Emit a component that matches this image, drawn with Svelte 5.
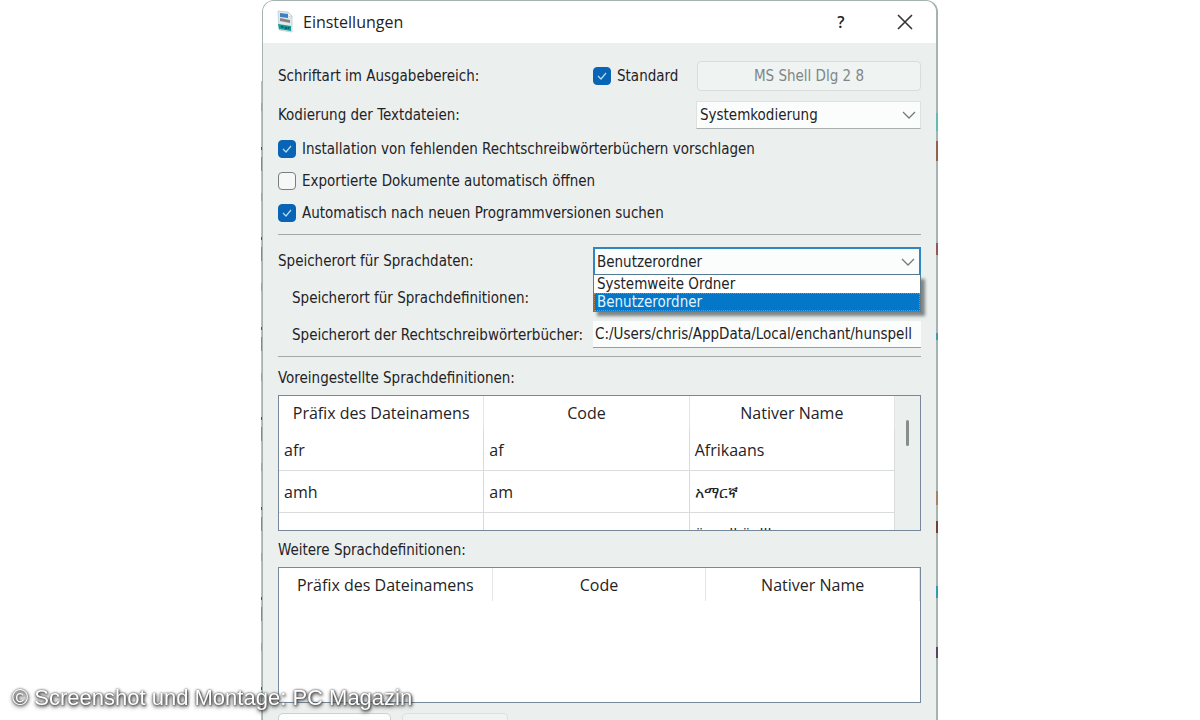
<script lang="ts">
  let standardFont = $state(true);
  let encoding = $state("Systemkodierung");
  let location = $state("Benutzerordner");
  let dictionaries = $state("C:/Users/chris/AppData/Local/enchant/hunspell");
  let menuOpen = $state(true);

  const locations = ["Systemweite Ordner", "Benutzerordner"];
  const columns = ["Präfix des Dateinamens", "Code", "Nativer Name"];

  let options = $state([
    { label: "Installation von fehlenden Rechtschreibwörterbüchern vorschlagen", checked: true },
    { label: "Exportierte Dokumente automatisch öffnen", checked: false },
    { label: "Automatisch nach neuen Programmversionen suchen", checked: true },
  ]);

  const languages = [
    ["afr", "af", "Afrikaans"],
    ["amh", "am", "አማርኛ"],
    ["", "", "ö      ll ö  lll"],
  ];

  function choose(name: string) {
    location = name;
    menuOpen = false;
  }
</script>

<main>
  <section class="dialog" aria-labelledby="dialog-title">
    <header>
      <svg class="app-icon" viewBox="0 0 18 24" aria-hidden="true">
        <path d="M2 1l10 1 4 4v16L3 20z" fill="#dfeaf0" stroke="#b9c6cc" stroke-width=".7" />
        <path d="M12 2v4l4 1z" fill="#fff" stroke="#b5c3c9" stroke-width=".5" />
        <path d="M4 3l8 1v4l-8-1z" fill="#3f7fc4" />
        <path d="M4 8l10 2v3L4 11z" fill="#8f8379" />
        <path d="M2 14l13 2v5L3 19z" fill="#119a98" />
        <path d="M5 17l1-1 1 2m2-1l1 2 1-2m1 2l1-2" fill="none" stroke="#0b4b58" />
      </svg>
      <h1 id="dialog-title">Einstellungen</h1>
      <button class="title-button" aria-label="Hilfe">?</button>
      <button class="title-button" aria-label="Schließen">
        <svg viewBox="0 0 16 16" width="16" height="16">
          <path d="M1 1l14 14M15 1L1 15" fill="none" stroke="#333" stroke-width="1.6" />
        </svg>
      </button>
    </header>

    <div class="body">
      <div class="row font-row">
        <span>Schriftart im Ausgabebereich:</span>
        <label class="check">
          <input type="checkbox" bind:checked={standardFont} />
          Standard
        </label>
        <button class="font-button" disabled={standardFont}>MS Shell Dlg 2 8</button>
      </div>
      <div class="row encoding-row">
        <label for="encoding">Kodierung der Textdateien:</label>
        <select id="encoding" bind:value={encoding}>
          <option>Systemkodierung</option>
          <option>UTF-8</option>
        </select>
      </div>

      <div class="options">
        {#each options as option}
          <label class="check">
            <input type="checkbox" bind:checked={option.checked} />
            {option.label}
          </label>
        {/each}
      </div>

      <hr />

      <div class="paths">
        <div class="row path-row">
          <label for="location">Speicherort für Sprachdaten:</label>
          <div class="combo">
            <select id="location" class:active={menuOpen} bind:value={location}>
              {#each locations as name}
                <option>{name}</option>
              {/each}
            </select>
            {#if menuOpen}
              <div class="menu" role="listbox" aria-label="Speicherort für Sprachdaten">
                {#each locations as name}
                  <button
                    role="option"
                    aria-selected={name === location}
                    class:selected={name === location}
                    onclick={() => choose(name)}>{name}</button
                  >
                {/each}
              </div>
            {/if}
          </div>
        </div>
        <div class="row path-row">
          <span class="sub">Speicherort für Sprachdefinitionen:</span>
        </div>
        <div class="row path-row">
          <label class="sub" for="dictionaries">Speicherort der Rechtschreibwörterbücher:</label>
          <input id="dictionaries" type="text" bind:value={dictionaries} />
        </div>
      </div>

      <hr />

      <h2>Voreingestellte Sprachdefinitionen:</h2>
      <div class="list">
        <table>
          <thead>
            <tr>
              {#each columns as column}
                <th>{column}</th>
              {/each}
            </tr>
          </thead>
          <tbody>
            {#each languages as language}
              <tr>
                {#each language as cell}
                  <td>{cell}</td>
                {/each}
              </tr>
            {/each}
          </tbody>
        </table>
        <div class="scrollbar"><div class="thumb"></div></div>
      </div>

      <h2>Weitere Sprachdefinitionen:</h2>
      <div class="list">
        <table>
          <thead>
            <tr>
              {#each columns as column}
                <th>{column}</th>
              {/each}
            </tr>
          </thead>
        </table>
      </div>

      <div class="actions">
        <button class="action" aria-label="Hinzufügen">
          <svg viewBox="0 0 18 18" width="18" height="18">
            <circle cx="9" cy="9" r="8" fill="#2fae4e" />
            <path d="M9 5v8M5 9h8" stroke="#fff" stroke-width="2" />
          </svg>
        </button>
        <button class="action" aria-label="Entfernen" disabled></button>
      </div>
    </div>
  </section>

  <p class="credit">© Screenshot und Montage: PC Magazin</p>
</main>

<style>
  :global(body) {
    background: #fff;
  }
  main {
    height: 100vh;
    overflow: hidden;
    box-sizing: border-box;
    padding: 0 262px;
    font: 15px/20px "DejaVu Sans Condensed", "DejaVu Sans", sans-serif;
    color: #1f2326;
  }
  button,
  input,
  select {
    box-sizing: border-box;
    margin: 0;
    font: inherit;
    color: inherit;
  }
  .dialog {
    position: relative;
    border: 1px solid #a5b3b1;
    border-right-width: 2px;
    border-bottom: 0;
    border-radius: 12px 12px 0 0;
    background: #ebefee;
  }
  /* bits of the desktop that show at the window edges */
  .dialog::before,
  .dialog::after {
    content: "";
    position: absolute;
    top: 80px;
    bottom: 0;
    width: 2px;
  }
  .dialog::before {
    left: -2px;
    width: 1px;
    background: repeating-linear-gradient(#b4c2c3 0 22px, #b39a94 22px 30px, #b4c2c3 30px 66px, #4b5a60 66px 69px, #b4c2c3 69px 76px, #5f9aa6 76px 90px);
  }
  .dialog::after {
    right: -2px;
    background: linear-gradient(
      transparent 32px,
      #63b9b3 32px 50px,
      transparent 50px 60px,
      #94604f 60px 80px,
      transparent 80px 162px,
      #8a5b59 162px 174px,
      transparent 174px 252px,
      #459aaa 252px 259px,
      transparent 259px 410px,
      #a38266 410px 424px,
      transparent 424px 440px,
      #70413d 440px 452px,
      transparent 452px 505px,
      #3997ae 505px 517px,
      transparent 517px 566px,
      #5c4360 566px 577px,
      transparent 577px
    );
  }
  header {
    display: flex;
    align-items: center;
    height: 42px;
    padding: 0 15px 0 13px;
    border-radius: 11px 11px 0 0;
    background: #fff;
  }
  .app-icon {
    width: 18px;
    height: 24px;
  }
  h1 {
    flex: 1;
    margin: 0 0 0 9px;
    font: 16px/20px "Open Sans", sans-serif;
  }
  .title-button {
    display: flex;
    justify-content: center;
    align-items: center;
    width: 32px;
    height: 32px;
    margin-left: 32px;
    padding: 0;
    border: 0;
    background: none;
    font: 600 16px/20px "Open Sans", sans-serif;
  }
  .body {
    padding: 17px 15px 0;
  }
  .row {
    display: grid;
    align-items: center;
  }
  .font-row {
    grid-template-columns: 315px 104px 1fr;
    height: 32px;
  }
  .encoding-row {
    grid-template-columns: 418px 1fr;
    height: 46px;
  }
  .path-row {
    grid-template-columns: 315px 1fr;
    height: 36px;
  }
  .check {
    display: flex;
    align-items: center;
    gap: 6px;
    white-space: nowrap;
  }
  .check input {
    appearance: none;
    width: 18px;
    height: 18px;
    border: 1px solid #777f80;
    border-radius: 4px;
    background: #f5f8f7;
  }
  .check input:checked {
    border-color: #0865b6;
    background: #0865b6
      url("data:image/svg+xml,%3Csvg xmlns='http://www.w3.org/2000/svg' viewBox='0 0 16 16'%3E%3Cpath d='M4 8l3 3 5-6' fill='none' stroke='%23b9dcf5' stroke-width='1.2'/%3E%3C/svg%3E");
  }
  .font-button {
    height: 30px;
    border: 1px solid #d8dddc;
    border-radius: 4px;
    background: #eff3f2;
  }
  .font-button:disabled {
    color: #7f8687;
  }
  select {
    appearance: none;
    display: block;
    width: 100%;
    height: 28px;
    padding: 0 24px 0 3px;
    border: 1px solid #dde2e1;
    border-bottom-color: #a9b0b0;
    border-radius: 0;
    background: #fbfdfc
      url("data:image/svg+xml,%3Csvg xmlns='http://www.w3.org/2000/svg' width='14' height='8'%3E%3Cpath d='M1 1l6 6 6-6' fill='none' stroke='%23727a7b' stroke-width='1.3'/%3E%3C/svg%3E")
      no-repeat right 4px center;
  }
  select.active {
    border: 2px solid #2f86c0;
    border-bottom: 1px solid #547990;
    padding-left: 2px;
  }
  .options {
    display: grid;
    gap: 12px;
    padding: 1px 0 11px;
  }
  hr {
    height: 1px;
    margin: 0;
    border: 0;
    background: #a2a9a8;
  }
  .paths {
    padding: 8px 0 3px;
  }
  .path-row + .path-row {
    height: 37px;
  }
  .sub {
    padding-left: 14px;
    white-space: nowrap;
  }
  .combo {
    position: relative;
  }
  .menu {
    position: absolute;
    z-index: 1;
    top: 100%;
    left: 0;
    right: 0;
    display: grid;
    border: 1px solid #667a84;
    border-top: 0;
    background: #fff;
    box-shadow: 4px 4px 3px #7d8586;
  }
  .menu button {
    height: 18px;
    padding: 0 3px;
    border: 0;
    background: none;
    line-height: 18px;
    text-align: left;
  }
  .menu .selected {
    background: #0477c8;
    color: #e2f3fd;
    outline: 1px dotted #b58458;
    outline-offset: -1px;
  }
  input[type="text"] {
    width: 100%;
    height: 27px;
    padding: 0 2px;
    border: 0;
    border-bottom: 1px solid #969e9e;
    background: #fbfdfc;
  }
  h2 {
    margin: 0;
    padding: 11px 0 7px;
    font-size: 15px;
    font-weight: 400;
    line-height: 20px;
  }
  .list {
    display: flex;
    height: 134px;
    overflow: hidden;
    border: 1px solid #76899a;
    background: #fff;
    font: 16px/20px "Open Sans", sans-serif;
  }
  .list + h2 {
    padding: 9px 0 7px;
  }
  table {
    flex: 1;
    align-self: flex-start;
    width: 100%;
    table-layout: fixed;
    border-spacing: 0;
  }
  th {
    height: 33px;
    padding: 0;
    border-right: 1px solid #e1e5e5;
    font-weight: 400;
  }
  td {
    height: 41px;
    padding: 0 5px;
    border-right: 1px solid #d8dcdc;
    border-bottom: 1px solid #d8dcdc;
    white-space: pre;
  }
  .scrollbar {
    flex: none;
    width: 25px;
    padding-top: 24px;
    background: #ebefee;
  }
  .thumb {
    width: 3px;
    height: 26px;
    margin: 0 auto;
    border-radius: 2px;
    background: #858d8d;
  }
  .actions {
    display: flex;
    gap: 11px;
    padding-top: 10px;
  }
  .action {
    width: 113px;
    height: 30px;
    padding: 0 6px;
    border: 1px solid #cbd0d0;
    border-radius: 5px;
    background: #fcfdfd;
    text-align: left;
  }
  .action svg {
    display: block;
  }
  .action:disabled {
    width: 106px;
    border-color: #dce1e0;
    background: #eff3f2;
  }
  .credit {
    position: fixed;
    left: 12px;
    bottom: 8px;
    margin: 0;
    color: #fff;
    font: 22px/28px "Liberation Sans", sans-serif;
    text-shadow: 0 0 2px #444, 1px 1px 3px #333, 0 2px 4px #555;
  }
</style>
